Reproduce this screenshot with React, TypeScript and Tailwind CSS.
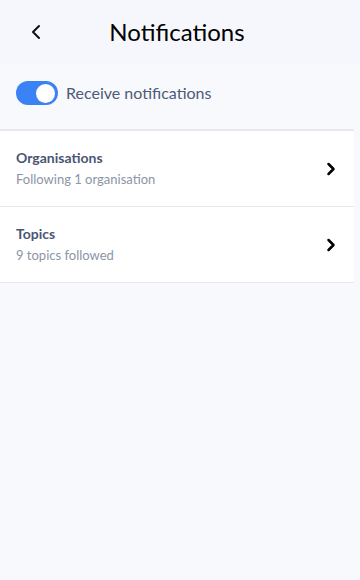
import { ChevronLeft, ChevronRight } from "lucide-react";

const rows = [
  { title: "Organisations", sub: "Following 1 organisation" },
  { title: "Topics", sub: "9 topics followed" },
];

export default function App() {
  return (
    <div
      className="w-[360px] h-[580px] bg-[#f8f9fd] overflow-hidden"
      style={{ fontFamily: "Lato, 'Noto Sans', sans-serif" }}
    >
      <header className="relative h-16 bg-[#f5f7fc] flex items-center justify-center pr-[6px]">
        <button className="absolute left-[24px] top-[20px] text-[#111]">
          <ChevronLeft size={24} strokeWidth={2} />
        </button>
        <h1 className="text-[24px] text-black leading-none">Notifications</h1>
      </header>

      <div className="flex items-center gap-2 px-4 pt-[17px] pb-6">
        <div className="w-[42px] h-6 rounded-full bg-[#3b82f6] flex items-center justify-end px-[3px]">
          <div className="w-[19px] h-[19px] rounded-full bg-white" />
        </div>
        <span className="text-[16px] text-[#4d5a78]">Receive notifications</span>
      </div>

      <div className="mr-[6px] bg-white border-t-2 border-[#e6e9ef]">
        {rows.map((r) => (
          <div
            key={r.title}
            className="flex items-center justify-between pl-4 pr-[13px] h-[76px] border-b border-[#e6e8ec]"
          >
            <div className="flex flex-col gap-[5px]">
              <span className="text-[14px] font-bold text-[#4a5674] leading-4">{r.title}</span>
              <span className="text-[13px] text-[#8c95a8] leading-4">{r.sub}</span>
            </div>
            <ChevronRight size={20} strokeWidth={3} className="text-black" />
          </div>
        ))}
      </div>
    </div>
  );
}
